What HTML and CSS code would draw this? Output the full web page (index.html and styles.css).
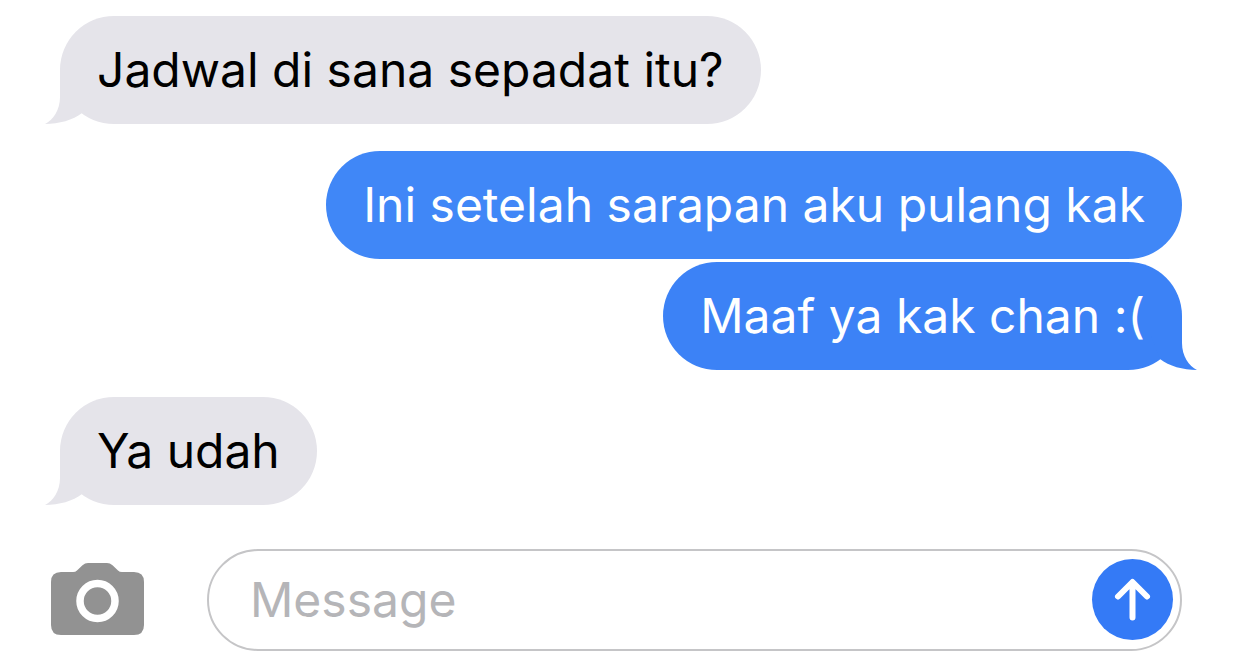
FILE: index.html
```html
<!DOCTYPE html>
<html lang="id">
<head>
    <meta charset="UTF-8">
    <meta name="viewport" content="width=device-width, initial-scale=1.0">
    <title>Messages</title>
    <link rel="stylesheet" href="styles.css">
</head>
<body>

    <main class="chat">
        <div class="bubble received">
            Jadwal di sana sepadat itu?
            <svg class="bubble-tail" viewBox="0 0 46 54" aria-hidden="true"><path d="M15 0V27C15 40 8 50 0 54C14 54 28 50 37 43L46 20V0Z"/></svg>
        </div>
        <div class="bubble sent">Ini setelah sarapan aku pulang kak</div>
        <div class="bubble sent">
            Maaf ya kak chan :(
            <svg class="bubble-tail" viewBox="0 0 46 54" aria-hidden="true"><path d="M15 0V27C15 40 8 50 0 54C14 54 28 50 37 43L46 20V0Z"/></svg>
        </div>
        <div class="bubble received">
            Ya udah
            <svg class="bubble-tail" viewBox="0 0 46 54" aria-hidden="true"><path d="M15 0V27C15 40 8 50 0 54C14 54 28 50 37 43L46 20V0Z"/></svg>
        </div>
    </main>

    <form class="composer">
        <button class="camera" type="button" aria-label="Camera">
            <svg viewBox="0 0 93 74" aria-hidden="true">
                <path fill="#929292" d="M10 9H22Q24.500 9 26 7.500L31.500 2.300Q34 0 37 0H56Q59 0 61.500 2.300L67 7.500Q68.500 9 71 9H83Q93 9 93 19V62Q93 72 83 72H10Q0 72 0 62V19Q0 9 10 9Z"/>
                <circle cx="46.500" cy="38" r="17.500" fill="none" stroke="#fff" stroke-width="7.500"/>
            </svg>
        </button>
        <div class="field">
            <input type="text" placeholder="Message" aria-label="Message">
            <button class="send" type="button" aria-label="Send">
                <svg viewBox="0 0 81 81" aria-hidden="true"><path d="M40.500 58.500V24M26 37.500L40.500 23L55 37.500"/></svg>
            </button>
        </div>
    </form>

</body>
</html>
```
FILE: styles.css
```css
* {
    box-sizing: border-box;
}

body {
    margin: 0;
    padding: 16px 59px 15px 51px;
    background: #fff;
    font-family: Inter, 'Liberation Sans', sans-serif;
    font-size: 48px;
}

.chat {
    display: flex;
    flex-direction: column;
    align-items: flex-start;
    padding-left: 9px;
}

.bubble {
    position: relative;
    padding: 24px 37px;
    border-radius: 54px;
    line-height: 60px;
}

.received {
    background: #e5e4ea;
    color: #000;
}

.sent {
    align-self: flex-end;
    background: #4087f7;
    color: #fff;
}

.received + .sent,
.sent + .received {
    margin-top: 27px;
}

.sent + .sent {
    margin-top: 3px;
    background: #3c82f6;
}

/* tail hangs off the bottom corner of the last bubble in a group */
.bubble-tail {
    position: absolute;
    bottom: 0;
    left: -15px;
    width: 46px;
    height: 54px;
    fill: #e5e4ea;
}

.sent .bubble-tail {
    left: auto;
    right: -15px;
    fill: #3c82f6;
    transform: scaleX(-1);
}

.composer {
    display: flex;
    align-items: center;
    gap: 63px;
    margin-top: 44px;
}

button {
    padding: 0;
    border: 0;
    background: none;
    cursor: pointer;
}

button svg {
    display: block;
    width: 100%;
}

.camera {
    flex: none;
    width: 93px;
}

.field {
    display: flex;
    flex: 1;
    align-items: center;
    min-width: 0;
    height: 102px;
    padding: 0 7px 1px 41px;
    border: 2px solid #c5c5c7;
    border-radius: 51px;
}

.field input {
    flex: 1;
    min-width: 0;
    padding: 0;
    border: 0;
    outline: 0;
    background: none;
    font: inherit;
}

.field input::placeholder {
    color: #b5b5b8;
    opacity: 1;
}

.send {
    flex: none;
    width: 81px;
    height: 81px;
    border-radius: 50%;
    background: #347af6;
}

.send path {
    fill: none;
    stroke: #fff;
    stroke-width: 6;
    stroke-linecap: round;
    stroke-linejoin: round;
}
```
